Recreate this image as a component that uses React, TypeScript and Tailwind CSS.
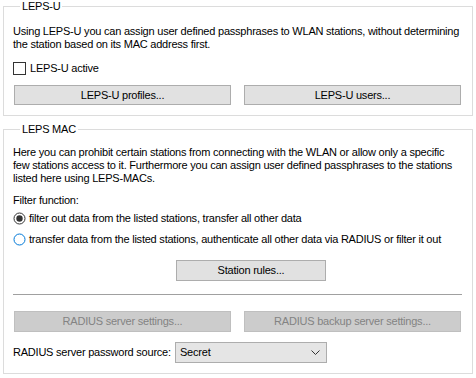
import React from 'react'

const font = { fontFamily: '"Liberation Sans", Arial, sans-serif' }

function Btn({ children, disabled, className = '' }: { children: React.ReactNode; disabled?: boolean; className?: string }) {
  return (
    <div
      className={
        'h-[20px] flex items-center justify-center border text-[11px] leading-[13px] ' +
        (disabled ? 'bg-[#cccccc] border-[#bfbfbf] text-[#838383]' : 'bg-[#e1e1e1] border-[#adadad] text-black') +
        ' ' +
        className
      }
    >
      {children}
    </div>
  )
}

function Radio({ checked, focus, label }: { checked?: boolean; focus?: boolean; label: string }) {
  return (
    <div className="flex items-center h-[13px]">
      <svg width="13" height="13" viewBox="0 0 13 13" className="shrink-0">
        <circle cx="6.5" cy="6.5" r="5.5" fill="white" stroke={focus ? '#0078d7' : '#333333'} strokeWidth="1" />
        {checked && <circle cx="6.5" cy="6.5" r="3.2" fill="#333333" />}
      </svg>
      <span className="ml-[3px]">{label}</span>
    </div>
  )
}

export default function App() {
  return (
    <div
      className="w-[476px] h-[378px] overflow-hidden bg-white text-black text-[11px] leading-[13px] tracking-[-0.22px] whitespace-nowrap pl-[3px] pr-[3px]"
      style={font}
    >
      {/* LEPS-U */}
      <fieldset className="border border-[#dcdcdc] w-[470px] pl-[9px] pr-[10px] pb-[10px]">
        <legend className="ml-[7px] px-[2px]">LEPS-U</legend>
        <p className="mt-[12px]">
          Using LEPS-U you can assign user defined passphrases to WLAN stations, without determining
          <br />
          the station based on its MAC address first.
        </p>
        <div className="mt-[11px] flex items-center">
          <div className="w-[13px] h-[13px] border border-[#333333] bg-white" />
          <span className="ml-[4px]">LEPS-U active</span>
        </div>
        <div className="mt-[10px] flex gap-[13px] pl-[1px]">
          <Btn className="w-[217px]">LEPS-U profiles...</Btn>
          <Btn className="w-[217px]">LEPS-U users...</Btn>
        </div>
      </fieldset>

      {/* LEPS MAC */}
      <fieldset className="mt-[7px] border border-[#dcdcdc] w-[470px] pl-[9px] pr-[10px] pb-[10px]">
        <legend className="ml-[7px] px-[2px]">LEPS MAC</legend>
        <p className="mt-[10px]">
          Here you can prohibit certain stations from connecting with the WLAN or allow only a specific
          <br />
          few stations access to it. Furthermore you can assign user defined passphrases to the stations
          <br />
          listed here using LEPS-MACs.
        </p>
        <div className="mt-[9px]">Filter function:</div>
        <div className="mt-[5px] flex flex-col gap-[8px]">
          <Radio checked label="filter out data from the listed stations, transfer all other data" />
          <Radio focus label="transfer data from the listed stations, authenticate all other data via RADIUS or filter it out" />
        </div>
        <div className="mt-[14px] flex">
          <Btn className="ml-[163px] w-[150px] h-[21px]">Station rules...</Btn>
        </div>
        <div className="mt-[13px] border-t border-[#a0a0a0]" />
        <div className="mt-[16px] flex gap-[13px] pl-[1px]">
          <Btn disabled className="w-[217px] h-[21px]">RADIUS server settings...</Btn>
          <Btn disabled className="w-[217px] h-[21px]">RADIUS backup server settings...</Btn>
        </div>
        <div className="mt-[10px] flex items-center">
          <span className="w-[162px]">RADIUS server password source:</span>
          <div className="w-[152px] h-[21px] bg-[#e5e5e5] border border-[#adadad] flex items-center justify-between pl-[4px] pr-[6px]">
            <span>Secret</span>
            <svg width="9" height="5" viewBox="0 0 9 5">
              <path d="M0.5 0.5 L4.5 4.5 L8.5 0.5" fill="none" stroke="#333333" strokeWidth="1" />
            </svg>
          </div>
        </div>
      </fieldset>
    </div>
  )
}
